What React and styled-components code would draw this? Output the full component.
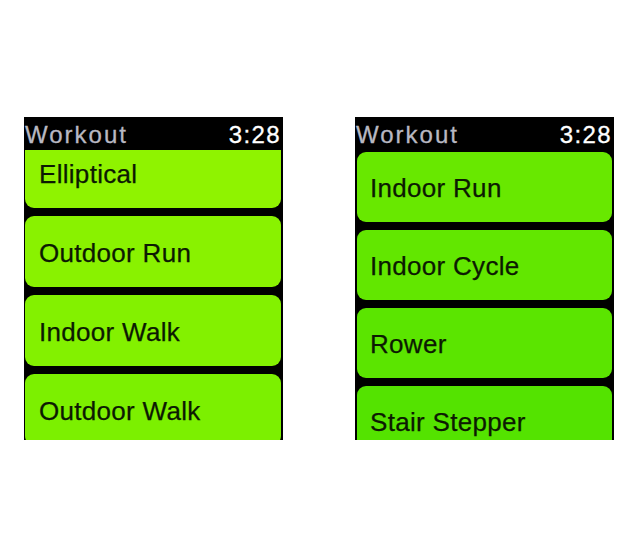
import React from "react";
import styled, { createGlobalStyle } from "styled-components";

const screens = [
  {
    offset: -13,
    cardHeight: 71,
    inset: 1,
    items: [
      { label: "Elliptical", color: "#8ff300" },
      { label: "Outdoor Run", color: "#89f200" },
      { label: "Indoor Walk", color: "#83f100" },
      { label: "Outdoor Walk", color: "#7cf000" },
    ],
  },
  {
    offset: 2,
    cardHeight: 70,
    inset: 2,
    items: [
      { label: "Indoor Run", color: "#68e800" },
      { label: "Indoor Cycle", color: "#62e700" },
      { label: "Rower", color: "#5be500" },
      { label: "Stair Stepper", color: "#54e300" },
    ],
  },
];

const App = () => {
  return (
    <>
      <GlobalStyle />
      <DivPage>
        {screens.map((screen, i) => (
          <DivScreen key={i}>
            <DivHeader>
              <SpanTitle>Workout</SpanTitle>
              <SpanTime>3:28</SpanTime>
            </DivHeader>
            <DivViewport $inset={screen.inset}>
              <DivList $offset={screen.offset}>
                {screen.items.map((item) => (
                  <DivCard
                    key={item.label}
                    $color={item.color}
                    $height={screen.cardHeight}
                    $inset={screen.inset}
                  >
                    {item.label}
                  </DivCard>
                ))}
              </DivList>
            </DivViewport>
          </DivScreen>
        ))}
      </DivPage>
    </>
  );
};

export default App;

const GlobalStyle = createGlobalStyle`
  body {
    margin: 0;
    background: #ffffff;
    font-family: "Liberation Sans", Arial, sans-serif;
  }
`;

const DivPage = styled.div`
  display: flex;
  gap: 72px;
  padding: 117px 0 0 24px;
`;

const DivScreen = styled.div`
  width: 259px;
  height: 323px;
  background: #000000;
  display: flex;
  flex-direction: column;
  overflow: hidden;
`;

const DivHeader = styled.div`
  height: 33px;
  flex-shrink: 0;
  box-sizing: border-box;
  display: flex;
  justify-content: space-between;
  align-items: center;
  padding: 3px 2px 0 1px;
  font-size: 24px;
  letter-spacing: 2px;
`;

const SpanTitle = styled.span`
  color: #b8b8c2;
  -webkit-text-stroke: 0.3px #b8b8c2;
`;

const SpanTime = styled.span`
  color: #ffffff;
  letter-spacing: 1.4px;
  -webkit-text-stroke: 0.3px #ffffff;
`;

const DivViewport = styled.div`
  flex: 1;
  overflow: hidden;
  padding: 0 2px 0 ${(p) => p.$inset}px;
`;

const DivList = styled.div`
  display: flex;
  flex-direction: column;
  gap: 8px;
  margin-top: ${(p) => p.$offset}px;
`;

/* text sits 15px in from the screen edge whatever the card inset */
const DivCard = styled.div`
  height: ${(p) => p.$height}px;
  flex-shrink: 0;
  box-sizing: border-box;
  display: flex;
  align-items: center;
  padding: 3px 0 0 ${(p) => 15 - p.$inset}px;
  border-radius: 9px;
  background: ${(p) => p.$color};
  color: #0c1a02;
  font-size: 26px;
  letter-spacing: 0.3px;
  -webkit-text-stroke: 0.25px #0c1a02;
`;
